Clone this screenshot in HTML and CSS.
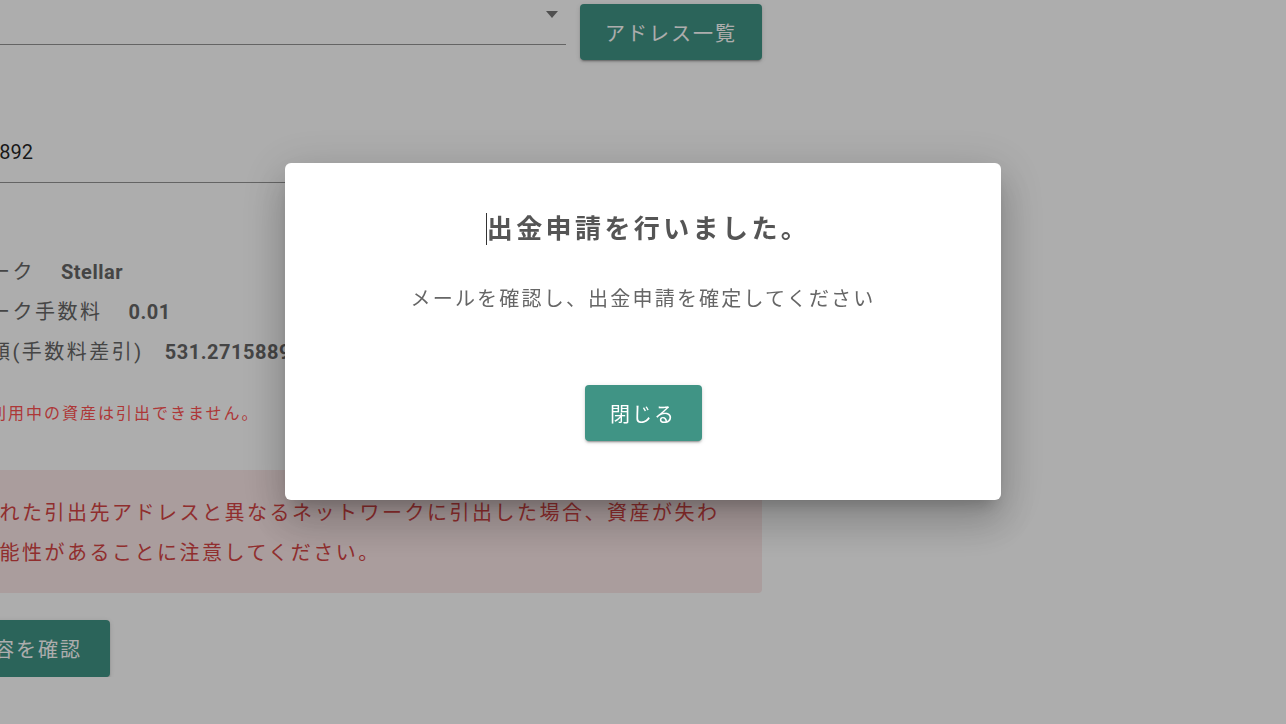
FILE: index.html
```html
<!DOCTYPE html>
<html lang="ja">
<head>
    <meta charset="UTF-8">
    <title>出金申請</title>
    <link rel="stylesheet" href="styles.css">
</head>
<body>
    <div class="page">
        <div class="select-row">
            <div class="select-field">
                <span class="select-arrow"></span>
            </div>
            <button class="btn">アドレス一覧</button>
        </div>

        <div class="amount-field">531.28158892</div>

        <div class="info-list">
            <div class="info-line">ネットワーク<span class="info-value">Stellar</span></div>
            <div class="info-line">ネットワーク手数料<span class="info-value">0.01</span></div>
            <div class="info-line">受取予定額(手数料差引)<span class="info-value info-total">531.27158892</span></div>
        </div>

        <p class="note">※ステーク利用中の資産は引出できません。</p>

        <div class="alert">
            登録された引出先アドレスと異なるネットワークに引出した場合、資産が失わ<br>れる可能性があることに注意してください。
        </div>

        <button class="btn btn-confirm">入力内容を確認</button>
    </div>

    <!-- dialog -->
    <div class="overlay">
        <div class="dialog">
            <h2 class="dialog-title"><span class="caret"></span>出金申請を行いました。</h2>
            <p class="dialog-text">メールを確認し、出金申請を確定してください</p>
            <button class="btn btn-close">閉じる</button>
        </div>
    </div>
</body>
</html>
```

FILE: styles.css
```css
/* Base styles */
body {
    margin: 0;
    overflow: hidden;
    background-color: #fff;
    font-family: Roboto, "Noto Sans CJK JP", sans-serif;
    color: #666;
}

.btn {
    background-color: #409485;
    color: #fff;
    border: none;
    border-radius: 4px;
    font-family: Roboto, "Noto Sans CJK JP", sans-serif;
    font-size: 20px;
    letter-spacing: 2px;
    padding: 0 24px;
    box-shadow: 0 3px 1px -2px rgba(0,0,0,0.2), 0 2px 2px 0 rgba(0,0,0,0.14), 0 1px 5px 0 rgba(0,0,0,0.12);
}

/* Page behind the dialog */
.page {
    width: 862px;
    margin-left: -100px;
}

.select-row {
    display: flex;
    align-items: flex-start;
    gap: 14px;
}

.select-field {
    flex: 1;
    height: 45px;
    border-bottom: 1px solid rgba(0,0,0,0.42);
    display: flex;
    justify-content: flex-end;
    padding-top: 11px;
    box-sizing: border-box;
}

.select-arrow {
    width: 0;
    height: 0;
    margin-right: 8px;
    border-left: 6px solid transparent;
    border-right: 6px solid transparent;
    border-top: 7px solid rgba(0,0,0,0.54);
}

.select-row .btn {
    margin-top: 4px;
    height: 56px;
    width: 182px;
}

.amount-field {
    margin-top: 72px;
    height: 40px;
    line-height: 40px;
    padding: 0 0 10px 4px;
    font-size: 20px;
    color: rgba(0,0,0,0.87);
    border-bottom: 1px solid rgba(0,0,0,0.42);
    white-space: nowrap;
}

.info-list {
    margin-top: 69px;
}

.info-line {
    height: 40px;
    line-height: 40px;
    font-size: 20px;
    letter-spacing: 2.5px;
    color: #666;
    white-space: nowrap;
}

.info-value {
    margin-left: 26px;
    font-weight: bold;
    letter-spacing: 0.5px;
    color: #666;
}

.info-total {
    margin-left: 21px;
}

.note {
    margin: 30px 0 0 0;
    font-size: 16px;
    line-height: 24px;
    letter-spacing: 2px;
    color: #ff5252;
}

.alert {
    margin-top: 44px;
    padding: 23px 16px 20px 32px;
    background-color: #fbe7e7;
    border-radius: 4px;
    color: #d44444;
    font-size: 20px;
    line-height: 40px;
    letter-spacing: 2.5px;
    white-space: nowrap;
}

.btn-confirm {
    margin-top: 27px;
    height: 57px;
    width: 210px;
}

/* Dialog */
.overlay {
    position: fixed;
    top: 0;
    left: 0;
    right: 0;
    bottom: 0;
    background-color: rgba(0,0,0,0.32);
    display: flex;
    justify-content: center;
    align-items: flex-start;
}

.dialog {
    margin-top: 163px;
    width: 716px;
    height: 337px;
    box-sizing: border-box;
    background-color: #fff;
    border-radius: 6px;
    padding-top: 46px;
    text-align: center;
    box-shadow: 0 11px 15px -7px rgba(0,0,0,0.2), 0 24px 38px 3px rgba(0,0,0,0.14), 0 9px 46px 8px rgba(0,0,0,0.12);
}

.dialog-title {
    margin: 0;
    padding-left: 10px;
    font-size: 26px;
    line-height: 40px;
    font-weight: bold;
    letter-spacing: 3.4px;
    color: #555;
}

.caret {
    display: inline-block;
    width: 1px;
    height: 32px;
    margin-right: 0;
    vertical-align: -7px;
    background-color: #333;
}

.dialog-text {
    margin: 34px 0 0 0;
    font-size: 20px;
    line-height: 32px;
    letter-spacing: 2.2px;
    color: #666;
}

.btn-close {
    margin-top: 70px;
    height: 56px;
    width: 117px;
    padding: 0;
}
```
